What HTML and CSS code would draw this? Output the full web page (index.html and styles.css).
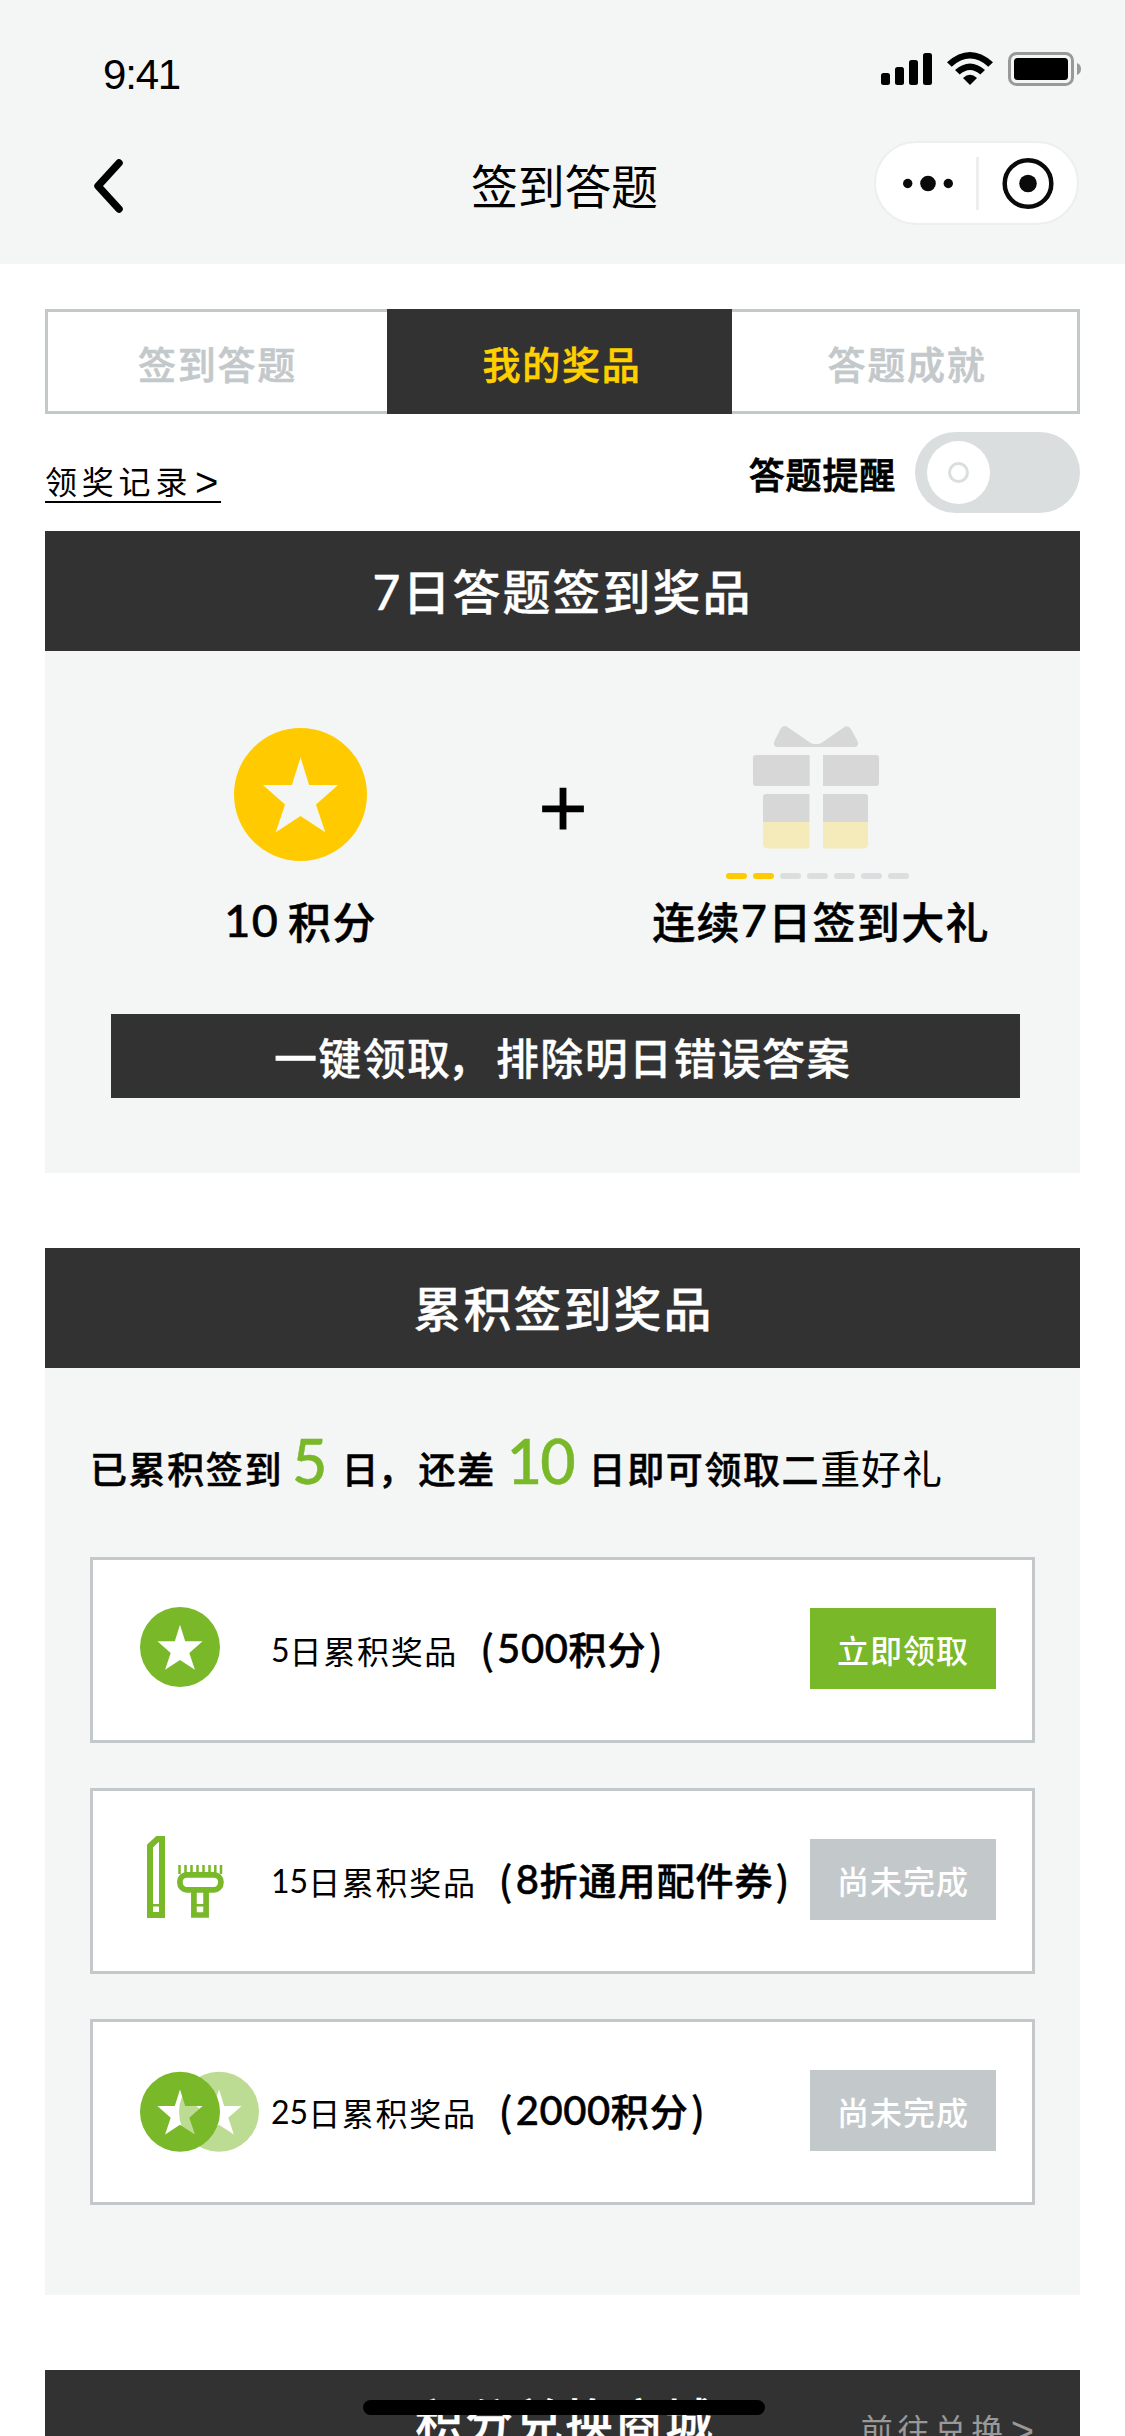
FILE: index.html
```html
<!DOCTYPE html>
<html lang="zh-CN">
<head>
<meta charset="utf-8">
<title>签到答题</title>
<link rel="stylesheet" href="styles.css">
</head>
<body>
<svg class="defs" width="0" height="0" aria-hidden="true">
  <defs>
    <path id="coin" fill-rule="evenodd" d="M40 0a40 40 0 1 0 0 80a40 40 0 1 0 0-80zM40 17.7L45.2 34.3H62.6L49.3 46L54.9 62.7L40 53L25.1 62.7L30.7 46L17.4 34.3H34.8z"/>
  </defs>
</svg>
<header class="top">
  <div class="status">
    <span class="time">9:41</span>
    <svg class="signals" width="202" height="36" viewBox="880 51 202 36">
      <g>
        <rect x="881" y="73" width="9" height="12" rx="2.5"/>
        <rect x="895" y="67" width="9" height="18" rx="2.5"/>
        <rect x="909" y="60" width="9" height="25" rx="2.5"/>
        <rect x="923" y="53" width="9" height="32" rx="2.5"/>
      </g>
      <path d="M947 62.3Q970 41.700 993 62.300L988.300 66.700Q970 50.500 951.700 66.700z"/>
      <path d="M955 70Q970 57 985 70L980.300 74.500Q970 65.500 959.700 74.500z"/>
      <path d="M963 78Q970 71.500 977 78L970 85z"/>
      <rect x="1009.500" y="53.500" width="63" height="31" rx="7" fill="none" stroke="#999" stroke-width="3"/>
      <rect x="1014" y="58" width="54" height="22" rx="3.500"/>
      <path d="M1077 63q4 1.500 4 6t-4 6z" fill="#999"/>
    </svg>
  </div>
  <div class="nav">
    <svg class="back" width="32" height="56" viewBox="0 0 32 56"><path d="M27 5L6 28L27 51" fill="none" stroke="#000" stroke-width="7.500" stroke-linecap="round" stroke-linejoin="round"/></svg>
    <h1 class="title">签到答题</h1>
    <div class="capsule">
      <svg class="more" width="50" height="18" viewBox="0 0 50 18"><circle cx="4.700" cy="9.500" r="4.700"/><circle cx="25" cy="9.500" r="7.800"/><circle cx="45.300" cy="9.500" r="4.700"/></svg>
      <i class="split"></i>
      <svg class="target" width="52" height="52" viewBox="0 0 52 52"><circle cx="26" cy="26.500" r="23.300" fill="none" stroke="#0a0a0a" stroke-width="4.500"/><circle cx="26" cy="26.500" r="8.800"/></svg>
    </div>
  </div>
</header>
<main class="main">
  <nav class="tabs">
    <a class="tab first">签到答题</a>
    <a class="tab active">我的奖品</a>
    <a class="tab last">答题成就</a>
  </nav>
  <div class="tools">
    <a class="record">领奖记录<span class="gt">&gt;</span></a>
    <div class="remind">
      <span class="remind-label">答题提醒</span>
      <span class="switch"><span class="knob"><i class="ring"></i></span></span>
    </div>
  </div>

  <section class="panel weekly">
    <h2 class="bar"><span class="num">7</span>日答题签到奖品</h2>
    <div class="rewards">
      <div class="reward points">
        <svg class="star" width="133" height="133" viewBox="0 0 80 80" fill="#ffcb00"><use href="#coin"/></svg>
        <p class="caption"><span class="num">10</span><span class="unit">积分</span></p>
      </div>
      <span class="plus">+</span>
      <div class="reward gift">
        <svg class="box" width="126" height="123" viewBox="753 726 126 123">
          <g fill="#d7d7d7">
            <path d="M783 726.500q2-1 4.500 0.500L811 743.300q5 2 10 0L844 727.300q4-2.500 7 1.700L857.500 741q2 5-2.500 6H777q-4.500-1-2.500-6L780.500 729q1-2 2.500-2.500z"/>
            <path d="M756 755h53.700v31H756q-3 0-3-3v-25q0-3 3-3zM823 755h53q3 0 3 3v25q0 3-3 3h-53z"/>
            <path d="M763 822v-25q0-3 3-3h43.500v28zM823 822v-28h42q3 0 3 3v25z"/>
          </g>
          <path fill="#f5ebba" d="M763 822h46.500v26.500H768q-5 0-5-5zM823 822h45v21.500q0 5-5 5h-40z"/>
        </svg>
        <div class="steps"><i class="on"></i><i class="on"></i><i></i><i></i><i></i><i></i><i></i></div>
        <p class="caption">连续<span class="num">7</span>日签到大礼</p>
      </div>
    </div>
    <button class="claim">一键领取<span class="comma">，</span>排除明日错误答案</button>
  </section>

  <section class="panel total">
    <h2 class="bar">累积签到奖品</h2>
    <p class="progress">已累积签到<b class="days five">5</b>日<span class="comma">，</span>还差<b class="days ten">10</b>日即可领取二<span class="light">重好礼</span></p>
    <ul class="list">
      <li class="card">
        <svg class="icon" width="120" height="84" viewBox="0 0 120 84" fill="#79b829"><use href="#coin" y="0"/></svg>
        <p class="name"><span class="num">5</span>日累积奖品</p>
        <p class="prize"><span class="paren">(</span><span class="num">500</span>积分<span class="paren">)</span></p>
        <button class="btn ready">立即领取</button>
      </li>
      <li class="card">
        <svg class="icon" width="120" height="84" viewBox="140 1838 120 84">
          <g fill="none" stroke="#79b829">
            <path stroke-width="6" d="M150 1846L157.500 1839H162V1915H150z"/>
            <path stroke-width="2.500" d="M152 1905.300H160M196 1905.300H204"/>
            <rect stroke-width="5.700" x="179.900" y="1874.800" width="41" height="15" rx="7"/>
            <path stroke-width="5.700" d="M193.900 1891V1915H206.100V1891"/>
            <path stroke-width="2.500" d="M179.500 1865v9M185.500 1865v9M191.500 1865v9M197.500 1865v9M203.500 1865v9M209.500 1865v9M215.300 1865v9M221 1865v9"/>
          </g>
        </svg>
        <p class="name"><span class="num">15</span>日累积奖品</p>
        <p class="prize"><span class="paren">(</span><span class="num">8</span>折通用配件券<span class="paren">)</span></p>
        <button class="btn">尚未完成</button>
      </li>
      <li class="card">
        <svg class="icon" width="120" height="84" viewBox="0 0 120 84"><use href="#coin" x="39" y="2.700" fill="#bcdc93"/><use href="#coin" y="2.700" fill="#79b829"/></svg>
        <p class="name"><span class="num">25</span>日累积奖品</p>
        <p class="prize"><span class="paren">(</span><span class="num">2000</span>积分<span class="paren">)</span></p>
        <button class="btn">尚未完成</button>
      </li>
    </ul>
  </section>

  <section class="panel mall">
    <h2 class="bar"><span></span><span class="mall-title">积分兑换商城</span><a class="more-link">前往兑换<span class="gt">&gt;</span></a></h2>
  </section>
</main>
<div class="home-indicator"></div>
</body>
</html>
```
FILE: styles.css
```css
* { box-sizing: border-box; margin: 0; padding: 0; }
html, body { width: 1125px; height: 2436px; overflow: hidden; }
body {
  position: relative;
  background: #fff;
  color: #000;
  font-family: "Noto Sans CJK SC", sans-serif;
  font-weight: 500;
}
svg { display: block; flex: none; overflow: visible; }
.defs { position: absolute; }
button { border: 0; font: inherit; }
.num { font-family: Lato, "Noto Sans CJK SC", sans-serif; line-height: 0; }

.top { height: 264px; background: #f4f6f5; }
.status { height: 138px; display: flex; justify-content: space-between; padding: 51px 43px 0 103px; }
.time { font: 400 42px/48px "Liberation Sans", sans-serif; letter-spacing: -1.2px; }
.nav { display: flex; align-items: center; height: 90px; padding: 0 46px 0 92px; }
.back { margin-top: 6px; }
.title { flex: 1; padding: 2px 0 0 347px; font-size: 47px; line-height: 60px; font-weight: 400; letter-spacing: -.3px; }
.capsule {
  display: flex; align-items: center;
  width: 205px; height: 84px; padding-left: 27px;
  border: 2px solid #eee; border-radius: 42px; background: #fff; fill: #0a0a0a;
}
.split { flex: none; width: 3px; height: 53px; margin: 0 23px; background: #eee; }

.main { padding: 45px 45px 0; }
.tabs { display: flex; height: 105px; border: 3px solid #c3c8ca; }
.tab {
  text-align: center; -webkit-text-stroke: .6px;
  font-size: 38px; line-height: 101px; letter-spacing: 1.8px; color: #c3c8ca;
}
.tab.first { width: 339px; }
.tab.active { width: 345px; margin: -3px 0; padding: 3px 0 0 5px; background: #323232; color: #ffd000; }
.tab.last { flex: 1; padding-left: 5px; }
.tools { display: flex; justify-content: space-between; height: 117px; padding-top: 18px; }
.record {
  display: flex; height: 53px; margin-top: 18px; border-bottom: 2px solid #000;
  font-size: 32px; font-weight: 400; line-height: 60px; letter-spacing: 4.800px;
}
.gt { width: 29px; font: 400 40px/65px "Liberation Sans", sans-serif; letter-spacing: 0; text-align: center; }
.remind { display: flex; height: 81px; }
.remind-label { margin-right: 19px; font-size: 36px; line-height: 82px; letter-spacing: .8px; -webkit-text-stroke: .8px; }
.switch { width: 165px; height: 81px; padding: 9px 12px; border-radius: 41px; background: #dadedf; }
.knob { display: grid; place-items: center; width: 63px; height: 63px; border-radius: 50%; background: #fff; }
.ring { width: 21px; height: 21px; border: 3px solid #dadedf; border-radius: 50%; }

.panel { background: #f4f6f5; }
.bar {
  height: 120px; background: #323232; color: #fff; text-align: center;
  font-size: 48px; font-weight: 500; line-height: 117px; letter-spacing: 2px; -webkit-text-stroke: .3px;
}
.weekly { height: 642px; margin-bottom: 75px; }
.rewards { display: grid; grid-template-columns: 510px 16px 492px; height: 363px; }
.reward { display: flex; flex-direction: column; align-items: center; }
.points { padding-top: 77px; }
.gift { padding-top: 75px; }
.plus { padding-top: 106px; font: 400 84px/100px "Liberation Sans", sans-serif; -webkit-text-stroke: .8px; justify-self: center; }
.caption { display: flex; font-size: 43px; line-height: 60px; letter-spacing: 1.300px; -webkit-text-stroke: .5px; }
.caption .num { font-size: 45px; line-height: 60px; }
.points .caption { margin-top: 29px; padding-left: 1px; }
.unit { margin-left: 9px; }
.box { margin-right: 3px; }
.steps { display: flex; gap: 6px; margin-top: 24px; }
.steps i { width: 21px; height: 6px; border-radius: 3px; background: #dadedf; }
.steps i.on { background: #ffcb00; }
.gift .caption { margin-top: 11px; padding-left: 8px; }
.claim {
  display: block; width: 909px; height: 84px; margin-left: 66px; padding-right: 6px;
  background: #323232; color: #fff; font-size: 43px; line-height: 80px; letter-spacing: 1.400px; -webkit-text-stroke: .3px;
}
.comma { margin: 0 4px 0 -4px; }

.total { height: 1047px; margin-bottom: 75px; padding: 0 45px; }
.total .bar { margin: 0 -45px; padding-left: 2px; }
.progress { display: flex; align-items: baseline; height: 189px; padding-top: 63px; line-height: 60px; font-size: 37px; letter-spacing: 1.600px; -webkit-text-stroke: .5px; }
.progress .comma { margin: 0 2px 0 -2px; }
.days { font: 500 61px/60px Lato, sans-serif; color: #79b829; letter-spacing: -2px; }
.light { font-size: 40px; font-weight: 400; letter-spacing: .9px; -webkit-text-stroke: 0; }
.five { margin: 0 16px 0 9px; }
.ten { margin: 0 15px 0 11px; }
.list { list-style: none; display: flex; flex-direction: column; gap: 45px; }
.card {
  display: flex; width: 945px; height: 186px; padding: 48px 36px 0 47px;
  border: 3px solid #c3c8ca; background: #fff; white-space: nowrap;
}
.icon { margin-top: -1px; }
.name { display: flex; margin-left: 11px; padding-top: 12px; font-size: 32px; font-weight: 400; line-height: 60px; letter-spacing: 1.700px; }
.name .num { line-height: 60px; letter-spacing: 0; }
.prize { display: flex; flex: 1; margin-left: 20px; padding-top: 10px; font-size: 38px; line-height: 60px; letter-spacing: 1px; -webkit-text-stroke: .5px; }
.prize .num { font-size: 40px; line-height: 60px; letter-spacing: .6px; }
.paren { width: 19px; font-size: 40px; text-align: center; -webkit-text-stroke: .2px; }
.btn { width: 186px; height: 81px; background: #c3c8ca; color: #fff; font-size: 32px; line-height: 78px; letter-spacing: 1px; }
.btn.ready { background: #79b829; }

.mall .bar { display: grid; grid-template-columns: 1fr auto 1fr; line-height: 97px; }
.mall-title { padding-left: 5px; }
.more-link { display: flex; justify-content: flex-end; padding: 10px 43px 0 0; color: #999; font-size: 32px; font-weight: 400; letter-spacing: 4.800px; -webkit-text-stroke: 0; }
.more-link .gt { line-height: 102px; }
.home-indicator {
  position: absolute; left: 363px; top: 2400px;
  width: 402px; height: 15px; border-radius: 8px; background: #000;
}
```
